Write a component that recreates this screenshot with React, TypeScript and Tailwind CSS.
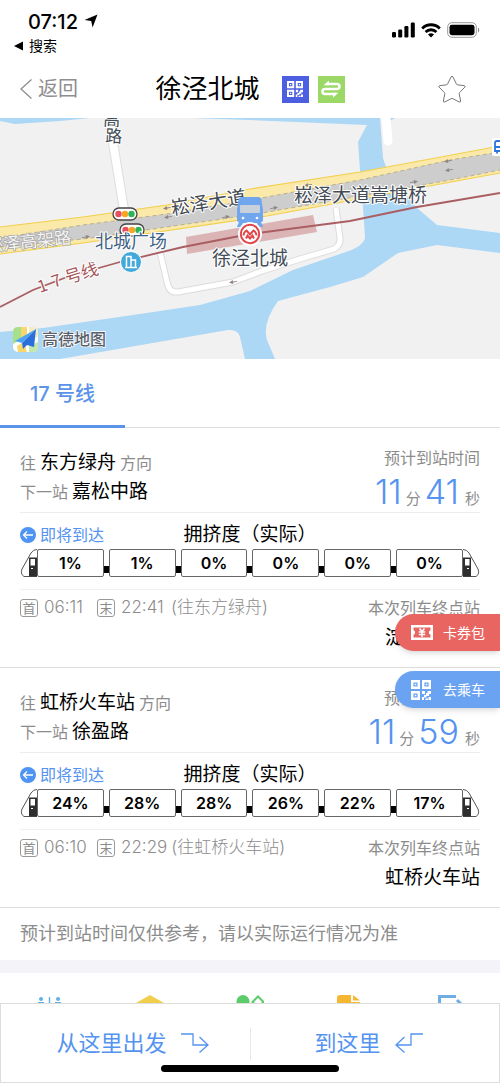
import { Fragment, type ReactNode } from 'react'

type Line = {
  to: string
  next: string
  minutes: number
  seconds: number
  load: number[]
  first: string
  last: string
  terminus: string
}

const lines: Line[] = [
  {
    to: '东方绿舟',
    next: '嘉松中路',
    minutes: 11,
    seconds: 41,
    load: [1, 1, 0, 0, 0, 0],
    first: '06:11',
    last: '22:41',
    terminus: '淀山湖大道'
  },
  {
    to: '虹桥火车站',
    next: '徐盈路',
    minutes: 11,
    seconds: 59,
    load: [24, 28, 28, 26, 22, 17],
    first: '06:10',
    last: '22:29',
    terminus: '虹桥火车站'
  }
]

function StatusBar() {
  return (
    <header className="flex h-[58px] items-start justify-between pl-7 pr-5 pt-2.5">
      <div>
        <div className="flex items-center gap-1.5 text-[20px] font-medium leading-6">
          07:12
          <svg viewBox="0 0 14 14" className="-mt-0.5 size-3.5">
            <path d="M13.5 0.5 8.6 13.5 7.2 7 0.5 6z" />
          </svg>
        </div>
        <a href="#search" className="-ml-3.5 flex items-center gap-1.5 text-sm leading-6">
          <svg viewBox="0 0 9 10" className="h-2.5 w-[9px]">
            <path d="M0 5 9 0.5v9z" />
          </svg>
          搜索
        </a>
      </div>

      <div className="mt-3 flex items-center gap-1.5">
        <svg viewBox="0 0 23 16" className="h-4 w-[23px]">
          <rect x="0" y="10" width="4" height="5.5" rx="1.2" />
          <rect x="6.2" y="7.5" width="4" height="8" rx="1.2" />
          <rect x="12.4" y="4" width="4" height="11.5" rx="1.2" />
          <rect x="18.8" y="0.5" width="4" height="15" rx="1.2" />
        </svg>
        <svg viewBox="0 0 20 15" className="h-[15px] w-5" fill="none" stroke="#000" strokeWidth="2.8">
          <path d="M1.2 5.4a12.4 12.4 0 0 1 17.6 0" />
          <path d="M4.6 9a7.6 7.6 0 0 1 10.8 0" />
          <path d="M10 14.6 7 11.6a4.3 4.3 0 0 1 6 0z" fill="#000" stroke="none" />
        </svg>
        <svg viewBox="0 0 33 16" className="h-4 w-[33px]">
          <rect x="0.7" y="0.7" width="28.6" height="14.6" rx="4.2" fill="none" stroke="#999" />
          <rect x="2.5" y="2.8" width="25" height="10.4" rx="2.4" />
          <path d="M31 5.5c1.6.5 1.6 4.5 0 5z" fill="#888" />
        </svg>
      </div>
    </header>
  )
}

function QrIcon({ className }: { className: string }) {
  return (
    <svg viewBox="0 0 20 20" className={className} fill="currentColor">
      <path fillRule="evenodd" d="M0 0h9v9H0zM2.4 2.4v4.2h4.2V2.4zM11 0h9v9h-9zM13.4 2.4v4.2h4.2V2.4zM0 11h9v9H0zM2.4 13.4v4.2h4.2v-4.2z" />
      <path d="M3.7 3.7h1.6v1.6H3.7zM14.7 3.7h1.6v1.6h-1.6zM3.7 14.7h1.6v1.6H3.7zM11 11h3v3h-3zM16.5 11H20v3h-2v2h-3v-3h1.5zM13 15h2.5v2.5H13zM11 17h2v3h-2zM17.5 17H20v3h-2.5zM14.5 18.5H17V20h-2.5z" />
    </svg>
  )
}

function NavBar() {
  return (
    <nav className="grid h-[60px] grid-cols-[1fr_auto_1fr] items-center px-5 pt-0.5">
      <button type="button" className="flex items-center gap-1.5 text-[20px] text-[#8e8e8e]">
        <svg viewBox="0 0 12 20" className="h-5 w-3" fill="none" stroke="currentColor" strokeWidth="1.3">
          <path d="M11.5 0.5 1 10l10.5 9.5" />
        </svg>
        返回
      </button>
      <div className="flex items-center">
        <h1 className="mr-[22px] text-[26px] leading-8">徐泾北城</h1>
        <span className="mr-[9px] grid size-[27px] place-items-center bg-[#4b5fe0] text-white">
          <QrIcon className="size-4" />
        </span>
        <span className="grid size-[27px] place-items-center bg-[#9bd866]">
          <svg viewBox="0 0 20 18" className="h-[18px] w-5" fill="none" stroke="#fff" strokeWidth="2.6">
            <path d="M5 4h11a2.5 2.5 0 0 1 0 5H4a2.5 2.5 0 0 0 0 5h11" />
            <path d="M2.5 5.3 8 0.5v4.8zM17.5 12.7 12 17.5v-4.8z" fill="#fff" stroke="none" />
          </svg>
        </span>
      </div>
      <button type="button" aria-label="收藏" className="mr-3.5 justify-self-end">
        <svg viewBox="0 0 28 28" className="size-7" fill="none" stroke="#777" strokeLinejoin="round">
          <path d="M13 2Q14 0 15 2l3.4 7q.3.7 1 .8l7 .9q1.4.3.5 1.4l-5.3 5.5q-.5.5-.4 1.2l1.4 7.2q0 1.5-1.4 1l-6.3-3.3q-.9-.5-1.8 0L6.8 27q-1.4.5-1.4-1l1.4-7.2q.1-.7-.4-1.2L1.1 12.1q-.9-1.1.5-1.4l7-.9q.7-.1 1-.8z" />
        </svg>
      </button>
    </nav>
  )
}

function TrafficLight({ x, y }: { x: number; y: number }) {
  return (
    <g transform={`translate(${x} ${y})`}>
      <rect x="-12" y="-6" width="24" height="12" rx="6" fill="#fff" stroke="#444" strokeWidth="1.3" />
      <circle cx="-6.5" r="3.2" fill="#e8505b" />
      <circle cx="0" r="3.2" fill="#f5a623" />
      <circle cx="6.5" r="3.2" fill="#2fb457" />
    </g>
  )
}

function RoadArrow({ x, y, flip = false }: { x: number; y: number; flip?: boolean }) {
  return (
    <path
      transform={`translate(${x} ${y}) rotate(${flip ? 171 : -9})`}
      d="M-4 0 0-2V-.5H4V.5H0V2z"
      fill="#8f8580"
    />
  )
}

function StationMap() {
  return (
    <svg
      viewBox="0 0 500 241"
      preserveAspectRatio="xMidYMid slice"
      className="block h-[241px] w-full bg-[#f1f1f1]"
      role="img"
      aria-label="徐泾北城站地图"
    >
      {/* rivers */}
      <g fill="#acd7f5">
        <path d="M0 0H90L60 3 15 6 0 3z" />
        <path d="M190 0H380L383 40 388 55 417 90 437 107 500 115V135L437 127 398 135 363 159 330 169 278 183Q262 205 267 222L275 241H245L240 219Q238 211 228 212L60 241H0V214L43 210 133 197 200 187 250 173 293 152 343 135Q366 128 365 118L363 90 360 52 358 24 367 7 250 2z" />
        <path d="M389 0h6l-5 3z" />
      </g>

      {/* small roads */}
      <g fill="none" strokeLinejoin="round">
        <path d="M109 0 125 98" stroke="#ddd" strokeWidth="10" />
        <path d="M109 0 125 98" stroke="#fff" strokeWidth="8" />
        <path d="M160 134 167 164Q169 175 178 174L233 164 262 153 300 141 334 131Q341 127 340 120L336 90" stroke="#dcdcdc" strokeWidth="7" />
        <path d="M160 134 167 164Q169 175 178 174L233 164 262 153 300 141 334 131Q341 127 340 120L336 90" stroke="#fff" strokeWidth="5" />
        <path d="M386 0 388 23" stroke="#fff" strokeWidth="9" strokeLinecap="round" />
      </g>

      {/* main road */}
      <path d="M0 109 83 99 167 87 250 71 360 54 500 28V55L267 98 83 125 0 136z" fill="#fae9a9" />
      <path d="M0 120 83 107 167 96 250 82 360 62 450 42 500 34V52L450 62 360 78 250 97 83 121 0 129z" fill="#cdcdcd" />
      <g fill="none">
        <path d="M0 109 83 99 167 87 250 71 360 54 500 28M0 136 83 125 267 98 500 55" stroke="#f2d04e" strokeWidth="1.2" />
        <path d="M0 120 83 107 167 96 250 82 360 62 450 42 500 34M0 129 83 121 250 97 360 78 450 62 500 52" stroke="#b8b08f" strokeDasharray="4 3" />
      </g>
      <RoadArrow x={167} y={90} />
      <RoadArrow x={168} y={99} />
      <RoadArrow x={226} y={99} flip />
      <RoadArrow x={86} y={119} flip />
      <RoadArrow x={274} y={90} flip />
      <RoadArrow x={308} y={67} />
      <RoadArrow x={414} y={64} flip />
      <RoadArrow x={448} y={43} />
      <RoadArrow x={449} y={52} />
      <RoadArrow x={233} y={164} />

      {/* platform and metro line */}
      <path d="M186 119 313 97 317 114 187 136z" fill="#dbb4b5" />
      <path d="M0 189 33 172 67 159 120 144 183 129 250 116 350 103 417 89 500 75" fill="none" stroke="#aa5e62" strokeWidth="1.8" />

      <TrafficLight x={125} y={96} />
      <TrafficLight x={132} y={112} />

      <circle cx="131" cy="144" r="10.5" fill="#43a8da" stroke="#fff" />
      <path d="M126.5 149.5v-11h4.5v11M131 142h4.5v7.5M125 149.5h12" fill="none" stroke="#fff" strokeWidth="1.5" />

      <rect x="492" y="20" width="12" height="18" rx="2" fill="#fff" />
      <path d="M502 23h-5q-2 0-2 2v8h7M497 33v2.5M495 29h6" fill="none" stroke="#2c75dc" strokeWidth="1.8" />

      {/* labels */}
      <g
        className="font-['Noto_Sans_CJK_SC',sans-serif] [paint-order:stroke]"
        fontSize="19"
        fill="#434b55"
        stroke="#fff"
        strokeWidth="2"
        strokeLinejoin="round"
      >
        <g fontSize="17">
          <text x="103" y="8" transform="rotate(3 111 8)">高</text>
          <text x="105" y="24" transform="rotate(3 111 24)">路</text>
        </g>
        <text x="172" y="97" transform="rotate(-9 172 97)">崧泽大道</text>
        <text x="294" y="84">崧泽大道嵩塘桥</text>
        <text x="212" y="147">徐泾北城</text>
        <text x="95" y="130" fontSize="18" fill="#3c6285">北城广场</text>
        <text x="-13" y="134" fontSize="17" fill="#f4f4f4" stroke="#a5a5a5" strokeWidth="1.5" transform="rotate(-6 -13 134)">
          崧泽高架路
        </text>
        <g fontSize="17" fill="#a5575b">
          <text x="40" y="175" transform="rotate(-20 40 175)">1</text>
          <text x="54" y="170" transform="rotate(-20 54 170)">7</text>
          <text x="67" y="166" transform="rotate(-17 67 166)">号线</text>
        </g>
      </g>

      {/* bus stop */}
      <path d="M242 79h16q3 0 3.5 3l1.5 10v10q0 2-2 2l2 5h-4l-2-4h-14l-2 4h-4l2-5q-2 0-2-2V92l1.5-10q.5-3 3.5-3z" fill="#6fa6ee" />
      <rect x="240" y="87" width="20" height="8" rx="1" fill="#c8d0dc" />
      <circle cx="243" cy="100" r="1.3" fill="#fff" />
      <circle cx="257" cy="100" r="1.3" fill="#fff" />

      {/* station marker */}
      <circle cx="250" cy="116" r="12" fill="#fff" />
      <circle cx="250" cy="116" r="9.2" fill="#fff" stroke="#e0474b" strokeWidth="2" />
      <path d="M243.5 117.5a6.5 6.5 0 0 1 3-5l3.5 4 3.5-4a6.5 6.5 0 0 1 3 5M246 120.5l1.5-3 2.5 3 2.5-3 1.5 3" fill="none" stroke="#e0474b" strokeWidth="2" />

      {/* map provider logo */}
      <rect x="13" y="209" width="25" height="25" rx="5" fill="#fff" />
      <path d="M13 214q0-5 5-5h3v12l-8 5z" fill="#a8df8a" />
      <path d="M21 209h6v7l-6 5zM17 228l7-4 3 10h-9z" fill="#f8d76c" />
      <path d="M29 209h4q5 0 5 5v5l-9 3z" fill="#f6ecc4" />
      <path d="M29 228l9-4v5q0 5-5 5h-4z" fill="#c2e8b0" />
      <path d="M36 211 15 223l7 2z" fill="#4aa3f5" />
      <path d="M36 211 22 225l1 6 4-4 7 2z" fill="#2b6fdb" />
      <text
        x="42"
        y="227"
        fontSize="16"
        fontWeight="500"
        fill="#58616b"
        stroke="#fff"
        strokeWidth="1.5"
        className="font-['Noto_Sans_CJK_SC',sans-serif] [paint-order:stroke]"
      >
        高德地图
      </text>
    </svg>
  )
}

function TrainNose({ className = '' }: { className?: string }) {
  return (
    <svg viewBox="0 0 17 28" className={`h-7 w-[17px] shrink-0 ${className}`} fill="none" stroke="#555">
      <path d="M17 .5Q13 .5 11 4L2 20Q0 25 4 27.5H17" />
      <path d="M9 8.5h8v19H9z" fill="#2e2e2e" stroke="none" />
      <path d="M10.5 10h4.5v6.5h-4.5z" fill="#fff" stroke="none" />
      <path d="M11 19.5h2" stroke="#fff" />
    </svg>
  )
}

function Train({ load }: { load: number[] }) {
  return (
    <div className="flex h-7">
      <TrainNose />
      {load.map((value, i) => (
        <Fragment key={i}>
          {i > 0 && <span className="mb-1 h-[7px] w-[5px] self-end bg-black" />}
          <span className="flex flex-1 items-center justify-center rounded-[2px] border border-[#666] text-base font-semibold">
            {value}%
          </span>
        </Fragment>
      ))}
      <TrainNose className="-scale-x-100" />
    </div>
  )
}

function Tag({ children }: { children: ReactNode }) {
  return (
    <span className="grid size-[18px] place-items-center rounded-[3px] border border-[#999] text-[13px] font-normal leading-none">
      {children}
    </span>
  )
}

function LineCard({ line }: { line: Line }) {
  return (
    <section className="border-b border-[#ddd] px-5 pb-[13px]">
      <div className="flex justify-between border-b border-[#ececec] pt-5 text-[#8c8c8c]">
        <div>
          <p className="flex h-[29px] items-baseline gap-1 leading-[29px]">
            往
            <strong className="text-[19px] font-normal text-black">{line.to}</strong>
            方向
          </p>
          <p className="flex h-[29px] items-baseline gap-1 leading-[29px]">
            下一站
            <strong className="text-[19px] font-normal text-black">{line.next}</strong>
          </p>
        </div>
        <div className="text-right">
          <p className="leading-5">预计到站时间</p>
          <p className="mt-1 flex h-10 items-baseline justify-end gap-1 text-[15px] leading-10">
            <span className="text-[34px] font-light text-[#5493f0]">{line.minutes}</span>
            分
            <span className="mr-0.5 text-[34px] font-light text-[#5493f0]">{line.seconds}</span>
            秒
          </p>
        </div>
      </div>

      <div className="border-b border-[#f1f1f1] pb-3 pt-2.5">
        <div className="mb-0.5 grid h-6 grid-cols-[1fr_auto_1fr] items-center">
          <div className="flex items-center gap-1 text-[#5493f0]">
            <svg viewBox="0 0 16 16" className="size-4" fill="none" stroke="#fff" strokeWidth="1.3">
              <circle cx="8" cy="8" r="8" fill="#4f93f3" stroke="none" />
              <path d="M13 8H3.5M7 4.5 3.5 8 7 11.5" />
            </svg>
            即将到达
          </div>
          <h2 className="text-[19px] leading-6">拥挤度（实际）</h2>
        </div>
        <Train load={line.load} />
      </div>

      <div className="flex h-9 items-center justify-between text-[#8c8c8c]">
        <div className="flex items-center gap-1.5 text-[17px] font-light">
          <Tag>首</Tag>
          <span className="mr-1 min-w-[43px]">{line.first}</span>
          <Tag>末</Tag>
          <span className="min-w-[46px]">{line.last}</span>
          <span className="-ml-0.5">(往{line.to})</span>
        </div>
        <span>本次列车终点站</span>
      </div>
      <p className="mb-1 text-right text-[19px] leading-6">{line.terminus}</p>
    </section>
  )
}

function Shortcuts() {
  return (
    <div className="grid grid-cols-5 justify-items-center pt-[22px]">
      <button type="button" aria-label="出入口">
        <svg viewBox="0 0 28 28" className="size-7" fill="#5fb0ea">
          <circle cx="5" cy="4" r="2" />
          <circle cx="22" cy="4" r="2" />
          <path d="M2 7h6v10H2zM19 7h6v10h-6zM12.8 2h1.4v20h-1.4z" />
        </svg>
      </button>
      <button type="button" aria-label="周边">
        <svg viewBox="0 0 28 28" className="size-7" fill="#f2ce4d">
          <path d="M14 0 28 8v13l-14 7L0 21V8z" />
        </svg>
      </button>
      <button type="button" aria-label="设施">
        <svg viewBox="0 0 28 28" className="size-7" fill="none" stroke="#5ccb6b" strokeWidth="2">
          <circle cx="7" cy="6.5" r="6.5" fill="#5ccb6b" stroke="none" />
          <path d="m22 1.5 5.5 5.5-5.5 5.5L16.5 7z" />
        </svg>
      </button>
      <button type="button" aria-label="时刻表">
        <svg viewBox="0 0 28 28" className="size-7" fill="#f5b731">
          <path d="M4 0h11v7h9v21H1V3q0-3 3-3z" />
          <path d="M17 0 24 5.5h-7z" />
        </svg>
      </button>
      <button type="button" aria-label="反馈">
        <svg viewBox="0 0 28 28" className="size-7" fill="none" stroke="#6fade2" strokeWidth="3">
          <path d="M3.5 28V1.5H20M21 5l6 6" />
        </svg>
      </button>
    </div>
  )
}

function FloatingActions() {
  return (
    <div className="absolute right-0 top-[614px] flex flex-col gap-5 text-sm text-white">
      <button type="button" className="flex h-[37px] items-center rounded-l-full bg-[#e96562] pl-4 pr-[15px] shadow-md">
        <svg viewBox="0 0 22 15" className="mr-2.5 h-[15px] w-[22px]">
          <rect width="22" height="15" fill="#fff" />
          <path d="M2.5 2.5h17v2.8a2.3 2.3 0 0 0 0 4.4v2.8h-17V9.7a2.3 2.3 0 0 0 0-4.4z" fill="#e96562" />
          <path d="m8.5 3.5 2.5 3 2.5-3M11 6.5V12M7.8 7h6.4M7.8 9.5h6.4" fill="none" stroke="#fff" strokeWidth="1.6" />
        </svg>
        卡券包
      </button>
      <button type="button" className="flex h-[37px] items-center rounded-l-full bg-[#6ba3f3] pl-4 pr-[15px] shadow-md">
        <QrIcon className="mr-3 size-5" />
        去乘车
      </button>
    </div>
  )
}

function RouteBar() {
  return (
    <footer className="relative grid h-20 shrink-0 grid-cols-2 border border-[#ddd] bg-white text-[22px] text-[#5493f0]">
      <button type="button" className="flex items-center justify-center gap-3.5 pl-3.5">
        从这里出发
        <svg viewBox="0 0 28 20" className="h-5 w-7" fill="none" stroke="currentColor" strokeWidth="1.3">
          <path d="M0 1h12v11h15M18.5 4l8.5 8-8.5 7.5" />
        </svg>
      </button>
      <button type="button" className="flex items-center justify-center gap-3.5 pr-3">
        到这里
        <svg viewBox="0 0 28 20" className="h-5 w-7" fill="none" stroke="currentColor" strokeWidth="1.3">
          <path d="M28 1H16v11H1M9.5 4 1 12l8.5 7.5" />
        </svg>
      </button>
      <span className="absolute left-1/2 top-6 h-8 w-px bg-[#e8e8e8]" />
      <span className="absolute bottom-2.5 left-1/2 h-[7px] w-[178px] -translate-x-1/2 rounded-full bg-black" />
    </footer>
  )
}

export default function App() {
  return (
    <div className="relative flex h-screen flex-col overflow-hidden bg-white font-['Inter','Noto_Sans_CJK_SC',sans-serif] text-base text-black">
      <StatusBar />
      <NavBar />

      <main className="min-h-0 flex-1 overflow-y-auto [scrollbar-width:none]">
        <StationMap />

        <div className="flex border-b border-[#ddd]">
          <button
            type="button"
            className="-mb-px h-[69px] w-1/4 border-b-[3px] border-[#5b93e8] pt-1 text-[20px] font-medium text-[#5b93e8]"
          >
            17 号线
          </button>
        </div>

        {lines.map((line) => (
          <LineCard key={line.to} line={line} />
        ))}

        <p className="px-5 text-lg leading-[52px] text-[#8c8c8c]">
          预计到站时间仅供参考，请以实际运行情况为准
        </p>
        <div className="h-[13px] bg-[#f3f3f9]" />
        <Shortcuts />
      </main>

      <RouteBar />
      <FloatingActions />
    </div>
  )
}
